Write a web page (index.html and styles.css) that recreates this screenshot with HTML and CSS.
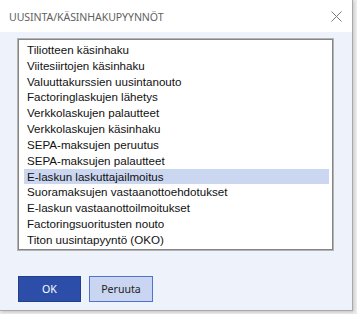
FILE: index.html
```html
<!DOCTYPE html>
<html lang="fi">
<head>
  <meta charset="UTF-8">
  <title>Uusinta/käsinhakupyynnöt</title>
  <link rel="stylesheet" href="styles.css">
</head>
<body>
  <div class="dialog">
    <div class="titlebar">
      <span class="title">UUSINTA/KÄSINHAKUPYYNNÖT</span>
      <svg class="close" width="11" height="11" viewBox="0 0 11 11">
        <path d="M0.5 0.5 L10.5 10.5 M10.5 0.5 L0.5 10.5" stroke="#7a7a7a" stroke-width="1" fill="none"/>
      </svg>
    </div>

    <div class="content">
      <ul class="listbox">
        <li>Tiliotteen käsinhaku</li>
        <li>Viitesiirtojen käsinhaku</li>
        <li>Valuuttakurssien uusintanouto</li>
        <li>Factoringlaskujen lähetys</li>
        <li>Verkkolaskujen palautteet</li>
        <li>Verkkolaskujen käsinhaku</li>
        <li>SEPA-maksujen peruutus</li>
        <li>SEPA-maksujen palautteet</li>
        <li class="selected">E-laskun laskuttajailmoitus</li>
        <li>Suoramaksujen vastaanottoehdotukset</li>
        <li>E-laskun vastaanottoilmoitukset</li>
        <li>Factoringsuoritusten nouto</li>
        <li>Titon uusintapyyntö (OKO)</li>
      </ul>

      <div class="buttons">
        <button class="btn btn-primary">OK</button>
        <button class="btn">Peruuta</button>
      </div>
    </div>
  </div>
</body>
</html>
```

FILE: styles.css
```css
* {
  margin: 0;
  padding: 0;
  box-sizing: border-box;
}

body {
  width: 357px;
  height: 314px;
  background: #ececec;
  overflow: hidden;
}

.dialog {
  width: 353px;
  height: 311px;
  background: #eef2fb;
  border-right: 1px solid #a9a9a9;
  border-bottom: 1px solid #a9a9a9;
  box-shadow: 1px 1px 3px rgba(0, 0, 0, 0.18);
  display: flex;
  flex-direction: column;
}

/* Title bar */
.titlebar {
  height: 32px;
  background: #fff;
  display: flex;
  align-items: center;
  justify-content: space-between;
  padding: 0 10px 0 9px;
}

.title {
  font-family: "Noto Sans", sans-serif;
  font-size: 10.6px;
  color: #5f5f5f;
  letter-spacing: -0.1px;
  padding-top: 1px;
}

.close {
  display: block;
  margin-top: 0;
}

/* Body */
.content {
  flex: 1;
  padding: 6px 18px 0 17px;
}

.listbox {
  list-style: none;
  height: 213px;
  background: #fff;
  border: 1px solid #b3b3b3;
  box-shadow: inset 0 0 0 1px #858585;
  padding: 3px 4px 2px 6px;
  font-family: "Liberation Sans", Arial, sans-serif;
  font-size: 11.6px;
  color: #111;
}

.listbox li {
  height: 15.83px;
  line-height: 15.83px;
  padding-left: 3px;
  white-space: nowrap;
}

.listbox li.selected {
  background: #cbd6f0;
}

/* Buttons */
.buttons {
  display: flex;
  gap: 8px;
  margin-top: 25px;
  padding-left: 1px;
}

.btn {
  width: 64px;
  height: 26px;
  font-family: "Noto Sans", sans-serif;
  font-size: 10.6px;
  color: #1e1e1e;
  background: #c9d5f1;
  border: 1px solid #4f73cf;
}

.btn-primary {
  width: 63px;
  background: #2c4ea8;
  border-color: #223f8e;
  color: #fff;
}
```
